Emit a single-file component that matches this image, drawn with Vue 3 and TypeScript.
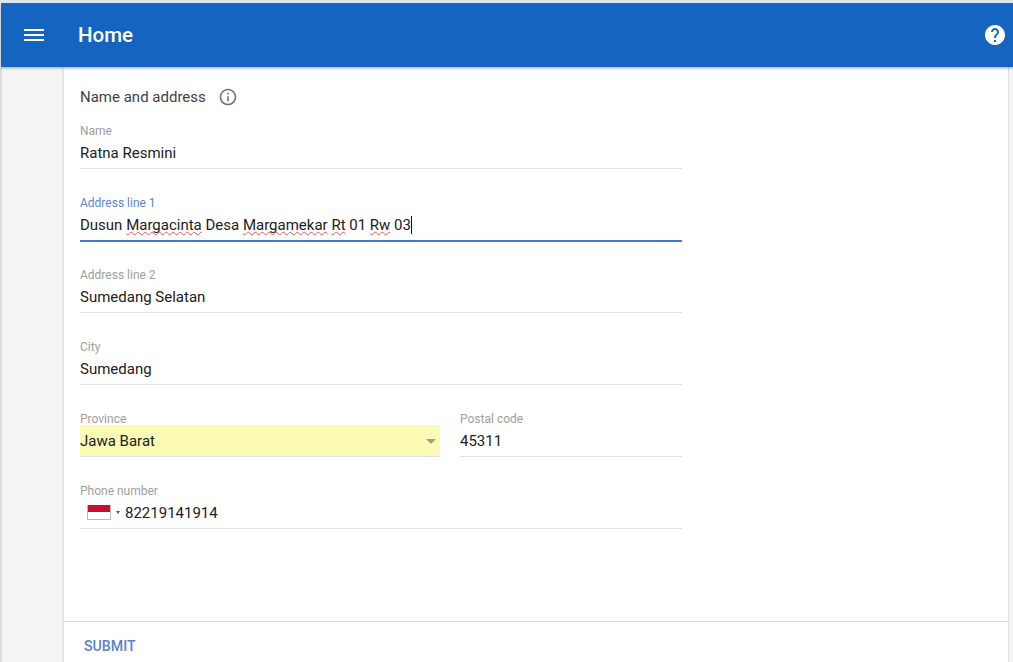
<script setup lang="ts">
const simple = [
  { label: 'Name', value: 'Ratna Resmini' },
];
const after = [
  { label: 'Address line 2', value: 'Sumedang Selatan' },
  { label: 'City', value: 'Sumedang' },
];
</script>

<template>
  <div class="page">
    <header class="bar">
      <svg class="menu" width="24" height="24" viewBox="0 0 24 24"><path d="M2 6h20v2H2zM2 11h20v2H2zM2 16h20v2H2z" fill="#fff"/></svg>
      <h1>Home</h1>
      <svg class="help" width="24" height="24" viewBox="0 0 24 24"><path fill="#fff" d="M12 2C6.48 2 2 6.48 2 12s4.48 10 10 10 10-4.48 10-10S17.52 2 12 2zm1 17h-2v-2h2v2zm2.07-7.75-.9.92C13.45 12.9 13 13.5 13 15h-2v-.5c0-1.100.45-2.100 1.170-2.830l1.240-1.260c.37-.36.590-.86.590-1.410 0-1.100-.9-2-2-2s-2 .9-2 2H8c0-2.210 1.790-4 4-4s4 1.790 4 4c0 .88-.36 1.680-.93 2.250z"/></svg>
    </header>
    <div class="body">
      <aside class="side"></aside>
      <main class="card">
        <div class="content">
          <div class="title">
            <span>Name and address</span>
            <svg width="20" height="20" viewBox="0 0 24 24"><path fill="#757575" d="M11 7h2v2h-2zm0 4h2v6h-2zm1-9C6.480 2 2 6.480 2 12s4.480 10 10 10 10-4.480 10-10S17.520 2 12 2zm0 18c-4.410 0-8-3.590-8-8s3.590-8 8-8 8 3.590 8 8-3.590 8-8 8z"/></svg>
          </div>
          <div class="form">
            <div v-for="f in simple" :key="f.label" class="field">
              <label>{{ f.label }}</label>
              <div class="val">{{ f.value }}</div>
            </div>
            <div class="field focused">
              <label>Address line 1</label>
              <div class="val">Dusun <span class="sp">Margacinta</span> Desa <span class="sp">Margamekar</span> <span class="sp">Rt</span> 01 <span class="sp">Rw</span> 03<span class="caret"></span></div>
            </div>
            <div v-for="f in after" :key="f.label" class="field">
              <label>{{ f.label }}</label>
              <div class="val">{{ f.value }}</div>
            </div>
            <div class="row">
              <div class="field province">
                <label>Province</label>
                <div class="val fill">Jawa Barat<span class="arrow"></span></div>
              </div>
              <div class="field postal">
                <label>Postal code</label>
                <div class="val">45311</div>
              </div>
            </div>
            <div class="field">
              <label>Phone number</label>
              <div class="val phone">
                <span class="flag"></span>
                <span class="mini"></span>
                <span class="num">82219141914</span>
              </div>
            </div>
          </div>
        </div>
        <footer class="foot"><button type="button">SUBMIT</button></footer>
      </main>
    </div>
  </div>
</template>

<style>
html, body { margin: 0; height: 100%; overflow: hidden; background: #f5f5f5; }
</style>

<style scoped>
.page {
  width: 1013px;
  height: 662px;
  display: flex;
  flex-direction: column;
  overflow: hidden;
  font-family: Roboto, "Liberation Sans", sans-serif;
  background: #f5f5f5;
  border-top: 3px solid #dfe5ee;
  box-sizing: border-box;
}
.bar {
  height: 64px;
  flex: none;
  margin-left: 1px;
  background: #1565c0;
  display: flex;
  align-items: center;
  color: #fff;
  padding: 0 6px 0 21px;
  box-shadow: 0 1px 3px rgba(0,0,0,.35);
  position: relative;
  z-index: 1;
}
.menu { flex: none; }
.bar h1 {
  margin: 0 0 0 32px;
  font-size: 20.500px;
  font-weight: 500;
  flex: 1;
}
.body { flex: 1; display: flex; min-height: 0; border-left: 2px solid #dcdcdc; }
.side { width: 60px; flex: none; border-right: 2px solid #e6e6e6; background: #f5f5f5; }
.card {
  width: 944px;
  flex: none;
  background: #fff;
  display: flex;
  flex-direction: column;
  border-right: 1px solid #e0e0e0;
}
.content {
  flex: 1;
  padding: 0 16px;
  margin-bottom: 3px;
  border-bottom: 1px solid #f6f6f6;
}
.title {
  display: flex;
  align-items: center;
  gap: 12px;
  height: 20px;
  margin-top: 20px;
  font-size: 15px;
  color: #424242;
}
.form { width: 602px; margin-top: 16px; }
.field {
  height: 45px;
  margin-bottom: 26px;
  border-bottom: 1px solid #e0e0e0;
}
label {
  display: block;
  height: 14px;
  line-height: 16px;
  font-size: 12px;
  color: #9e9e9e;
}
.val {
  height: 31px;
  line-height: 32px;
  font-size: 15px;
  color: #212121;
  white-space: nowrap;
}
.num { padding-top: 1px; }
.focused { border-bottom: 2px solid #4a79c4; margin-bottom: 25px; }
.focused label { color: #5a85d0; }
.sp {
  text-decoration: underline wavy #e05a5a 1px;
  text-underline-offset: 1px;
  text-decoration-skip-ink: none;
}
.caret {
  display: inline-block;
  width: 1px;
  height: 18px;
  background: #111;
  vertical-align: -4px;
}
.row { display: flex; gap: 20px; }
.province { width: 360px; }
.postal { width: 222px; }
.fill { background: #fbfbb4; position: relative; }
.arrow {
  position: absolute;
  right: 4px;
  top: 14px;
  border-left: 5px solid transparent;
  border-right: 5px solid transparent;
  border-top: 5px solid #9e9e8a;
}
.phone { display: flex; align-items: center; padding-left: 7px; }
.flag {
  width: 24px;
  height: 15px;
  box-sizing: border-box;
  background: linear-gradient(#c8102e 50%, #fff 50%);
  border: 1px solid #bbb;
  border-top: 0;
}
.mini {
  width: 0;
  height: 0;
  margin: 0 5px;
  border-left: 2.500px solid transparent;
  border-right: 2.500px solid transparent;
  border-top: 3px solid #555;
}
.foot {
  height: 41px;
  flex: none;
  border-top: 1px solid #e0e0e0;
  display: flex;
  align-items: center;
  padding: 7px 0 0 20px;
  box-sizing: border-box;
}
button {
  border: 0;
  padding: 0;
  background: none;
  font: 500 14.200px Roboto, "Liberation Sans", sans-serif;
  color: #5b82cc;
}
</style>
